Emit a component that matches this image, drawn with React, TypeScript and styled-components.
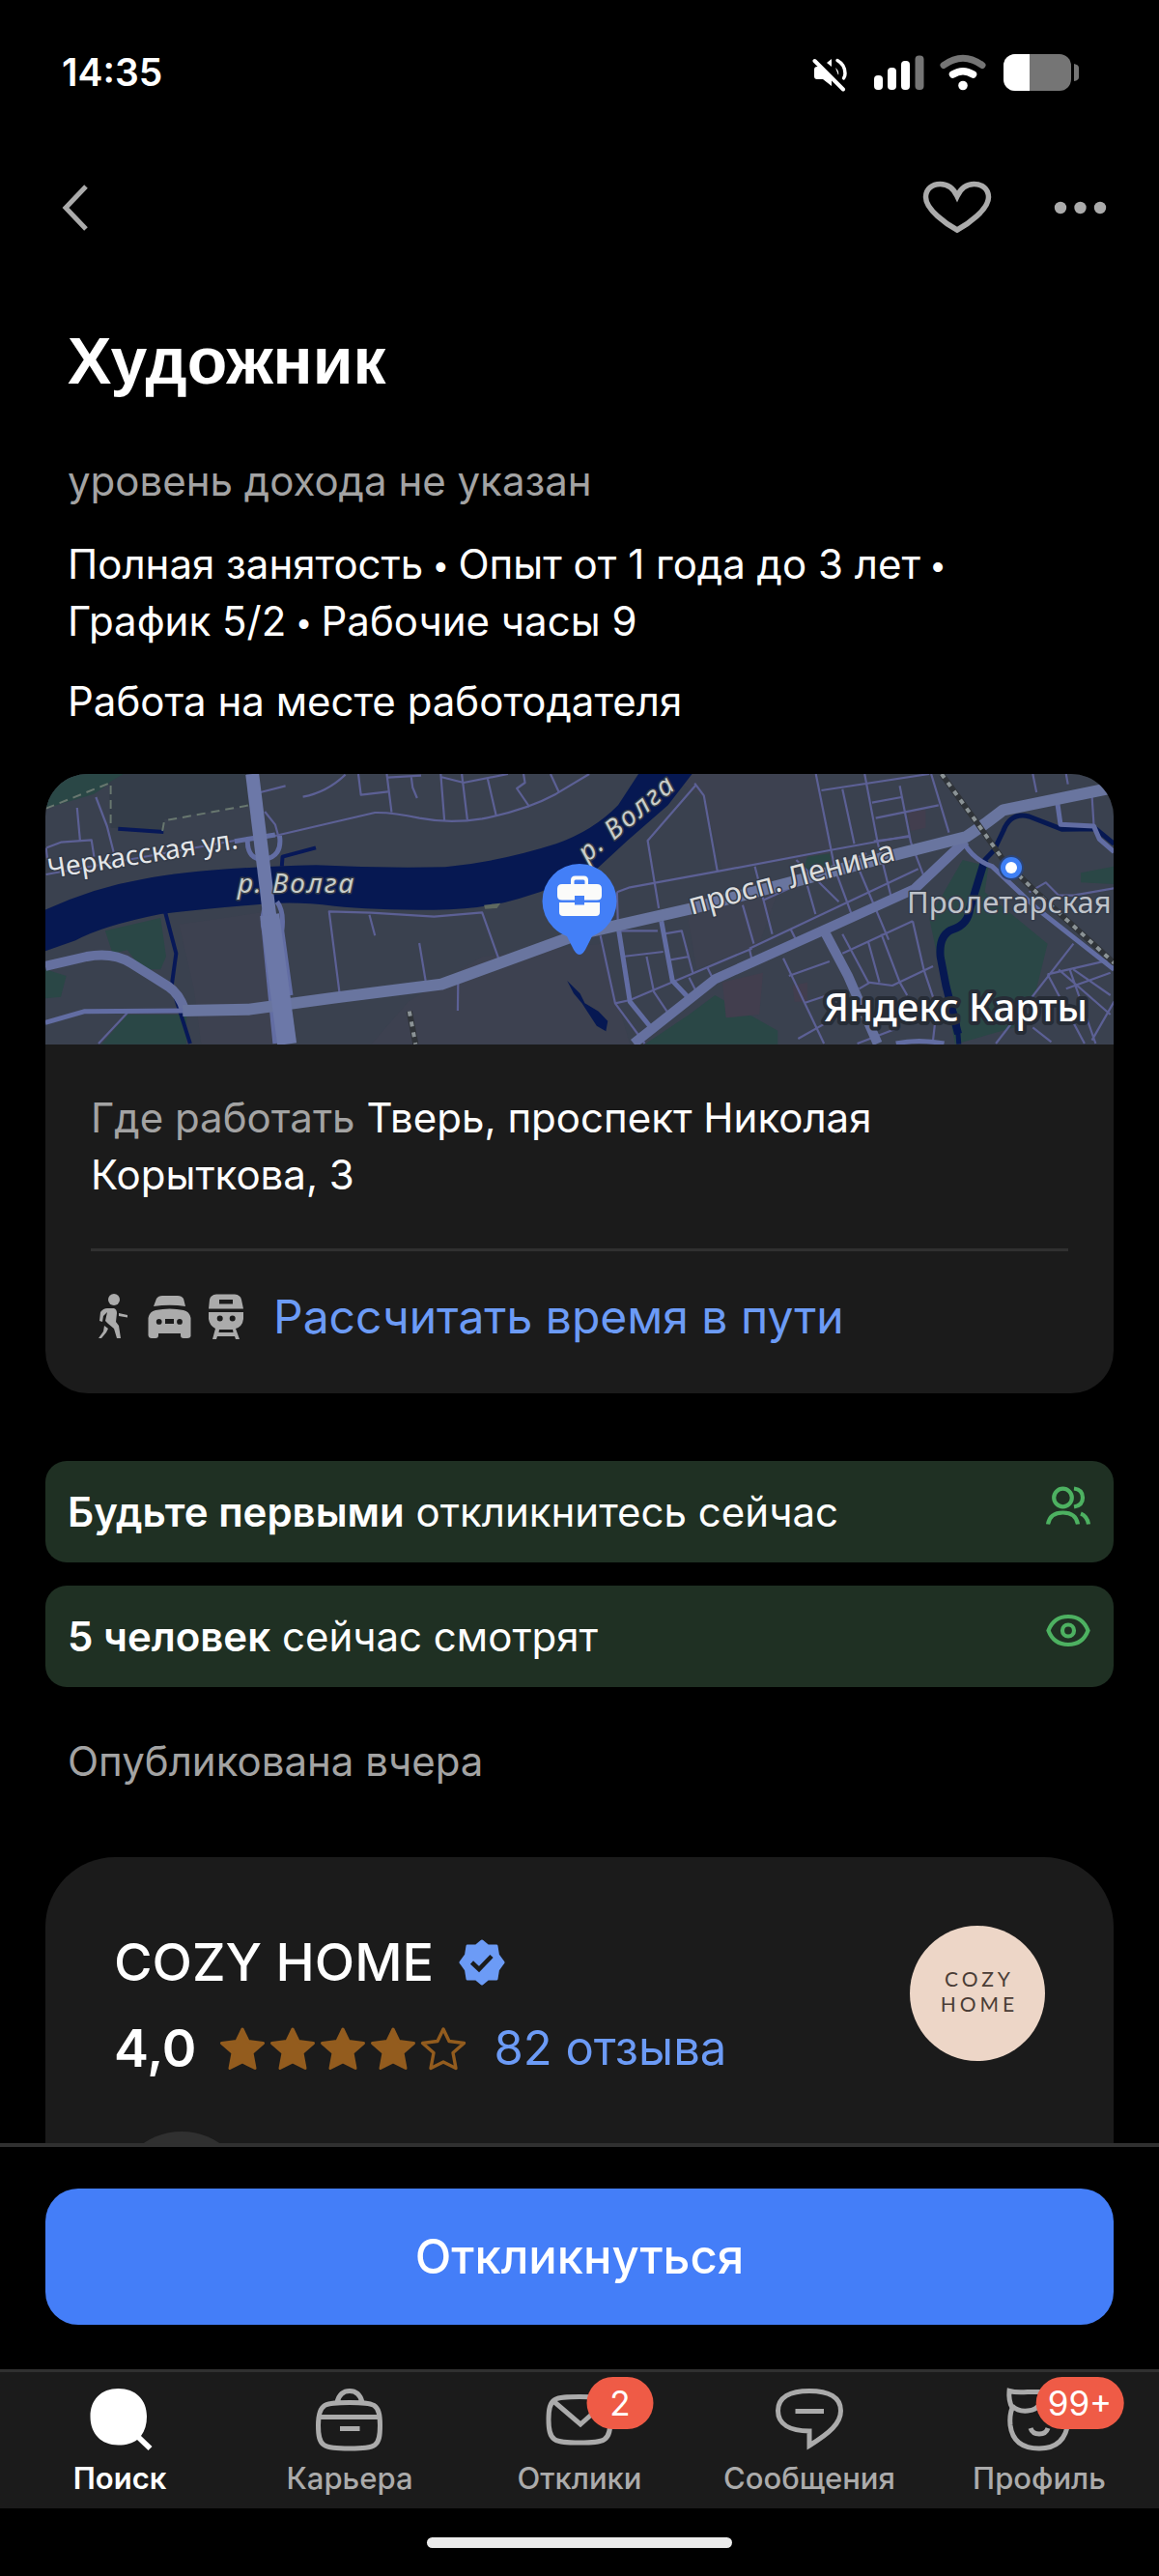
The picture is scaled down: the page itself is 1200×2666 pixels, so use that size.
import React from "react";
import styled, { createGlobalStyle } from "styled-components";

const color = {
  bg: "#000000",
  card: "#1b1b1b",
  line: "#303030",
  text: "#ffffff",
  muted: "#a3a3a3",
  icon: "#ababab",
  link: "#6c9bf6",
  accent: "#447ef8",
  notice: "#1f3023",
  green: "#4db161",
  star: "#935c1e",
  badge: "#ef5b46",
};

const GlobalStyle = createGlobalStyle`
  *, *::before, *::after { box-sizing: border-box; }
  body { margin: 0; background: ${color.bg}; color: ${color.text}; font-family: Inter, "Noto Sans", sans-serif; }
  h1, h2, p { margin: 0; }
  button { font: inherit; color: inherit; background: none; border: 0; padding: 0; cursor: pointer; }
  a { text-decoration: none; }
  svg { display: block; flex: none; }
`;

const Screen = styled.div`
  display: flex;
  flex-direction: column;
  height: 100vh;
  background: ${color.bg};
`;

const StatusBar = styled.div`
  display: flex;
  align-items: center;
  justify-content: space-between;
  height: 150px;
  padding: 0 83px 0 64px;
  flex: none;
`;

const Clock = styled.time`
  font-size: 39px;
  line-height: 48px;
  font-weight: 600;
`;

const StatusIcons = styled.div`
  display: flex;
  align-items: center;
`;

const NavBar = styled.header`
  display: flex;
  align-items: center;
  justify-content: space-between;
  height: 130px;
  padding: 0 54px 0 60px;
  flex: none;
`;

const NavActions = styled.div`
  display: flex;
  align-items: center;
  gap: 62px;
`;

const IconButton = styled.button`
  display: flex;
  align-items: center;
  justify-content: center;
  height: 72px;
`;

const Content = styled.main`
  flex: 1;
  min-height: 0;
  overflow-y: auto;
  scrollbar-width: none;
  padding: 53px 47px 0;
`;

const Title = styled.h1`
  padding: 0 23px;
  font-family: "Liberation Sans", Arial, sans-serif;
  font-size: 68px;
  line-height: 80px;
  font-weight: 700;
`;

const Text = styled.p<{ $muted?: boolean; $top?: number }>`
  padding: 0 23px;
  margin-top: ${(p) => p.$top ?? 0}px;
  font-size: 42px;
  line-height: 59px;
  color: ${(p) => (p.$muted ? color.muted : color.text)};
`;

const Dot = styled.span`
  font-family: "Liberation Sans", Arial, sans-serif;
  font-size: 36px;
  line-height: 36px;
`;

const PlaceCard = styled.section`
  margin-top: 46px;
  border-radius: 44px;
  overflow: hidden;
  background: ${color.card};
`;

const MapFrame = styled.div`
  height: 280px;

  svg {
    width: 100%;
    height: 100%;
  }
`;

const PlaceBody = styled.div`
  padding: 46px 47px 49px;
`;

const Address = styled.p`
  font-size: 42px;
  line-height: 59px;
`;

const Muted = styled.span`
  color: ${color.muted};
`;

const Divider = styled.hr`
  height: 3px;
  margin: 47px 0 38px;
  border: 0;
  background: ${color.line};
`;

const RouteLink = styled.a`
  display: flex;
  align-items: center;
  gap: 27px;
  color: ${color.link};
  font-size: 48px;
  line-height: 60px;
`;

const Notices = styled.div`
  display: flex;
  flex-direction: column;
  gap: 24px;
  margin-top: 70px;
`;

const Notice = styled.div`
  display: flex;
  justify-content: space-between;
  padding: 23px;
  border-radius: 22px;
  background: ${color.notice};
  font-size: 42px;
  line-height: 59px;

  b {
    font-weight: 600;
  }
`;

const CompanyCard = styled.section`
  display: flex;
  flex-direction: column;
  margin-top: 70px;
  padding: 71px 71px 0;
  border-radius: 72px 72px 0 0;
  background: ${color.card};
`;

const CompanyHead = styled.div`
  display: flex;
  justify-content: space-between;
`;

const CompanyInfo = styled.div`
  display: flex;
  flex-direction: column;
  gap: 23px;
  padding-top: 5px;
`;

const CompanyName = styled.h2`
  display: flex;
  align-items: center;
  gap: 26px;
  font-size: 54px;
  line-height: 66px;
  font-weight: 500;
`;

const Rating = styled.div`
  display: flex;
  align-items: center;
  gap: 24px;
  font-size: 54px;
  line-height: 66px;
  font-weight: 600;
`;

const Stars = styled.div`
  display: flex;
  gap: 4px;
`;

const Reviews = styled.a`
  color: ${color.link};
  font-size: 49px;
  font-weight: 400;
  padding-left: 4px;
`;

const CompanyLogo = styled.div`
  display: flex;
  flex-direction: column;
  align-items: center;
  justify-content: center;
  width: 140px;
  height: 140px;
  padding: 0 0 4px 4px;
  border-radius: 50%;
  background: #edd6c7;
  color: #4a3d36;
  font-family: Lato, sans-serif;
  font-size: 21px;
  line-height: 26px;
  letter-spacing: 4px;
`;

const ReviewerAvatar = styled.div`
  width: 140px;
  height: 140px;
  margin: 53px 0 71px;
  border-radius: 50%;
  background: ${color.line};
`;

const ApplyBar = styled.div`
  flex: none;
  padding: 43px 47px 46px;
  border-top: 4px solid ${color.line};
`;

const ApplyButton = styled.button`
  width: 100%;
  height: 141px;
  border-radius: 34px;
  background: ${color.accent};
  color: ${color.text};
  font-size: 49px;
  line-height: 60px;
  font-weight: 500;
`;

const TabBar = styled.nav`
  display: flex;
  flex: none;
  padding: 0 5px;
  border-top: 3px solid ${color.line};
  background: ${color.card};
`;

const Tab = styled.a<{ $active?: boolean }>`
  display: flex;
  flex: 1 1 0;
  flex-direction: column;
  align-items: center;
  gap: 5px;
  padding: 13px 0 11px;
  color: ${(p) => (p.$active ? color.text : color.icon)};
  font-size: 31px;
  line-height: 40px;
  font-weight: ${(p) => (p.$active ? 600 : 500)};
`;

const TabIcon = styled.span`
  position: relative;
  display: block;
  width: 72px;
  height: 72px;
`;

const Badge = styled.span`
  position: absolute;
  top: -8px;
  left: 78px;
  transform: translateX(-50%);
  min-width: 69px;
  height: 54px;
  padding: 0 12px;
  border-radius: 27px;
  background: ${color.badge};
  color: ${color.text};
  font-size: 35px;
  line-height: 54px;
  font-weight: 400;
  text-align: center;
`;

const HomeArea = styled.div`
  display: flex;
  flex: none;
  justify-content: center;
  padding: 30px 0 29px;
`;

const HomeIndicator = styled.div`
  width: 316px;
  height: 11px;
  border-radius: 6px;
  background: #ebebeb;
`;

/* ---------- Status and navigation icons ---------- */

function StatusGlyphs() {
  return (
    <svg width="276" height="44" viewBox="0 -3 276 44" fill="#fff" aria-hidden="true">
      {/* muted speaker */}
      <path d="M5 13H11L20 22V33L11 26H5Q2 26 2 23V16Q2 13 5 13Z" />
      <path d="M15 9L20 5V13Z M24 14Q28 17 27 22Z" />
      <path d="M26 6.500Q34 11 34 20Q34 23 32.500 25" fill="none" stroke="#fff" strokeWidth="3.500" strokeLinecap="round" />
      <path d="M4 4L34 34" stroke="#000" strokeWidth="7" />
      <path d="M2.500 7L32 36.500" stroke="#fff" strokeWidth="4" strokeLinecap="round" />
      {/* signal */}
      <rect x="64" y="22" width="9" height="15" rx="4" />
      <rect x="78" y="14" width="9" height="23" rx="4" />
      <rect x="92" y="7" width="9" height="30" rx="4" />
      <rect x="106.500" y="1.500" width="9" height="35.500" rx="4" fill="#757575" />
      {/* wifi */}
      <path d="M136 11.500Q156 -3 176 11.500" fill="none" stroke="#757575" strokeWidth="7" strokeLinecap="round" />
      <path d="M145.500 21Q156 14.500 166.500 21" fill="none" stroke="#fff" strokeWidth="7.500" strokeLinecap="round" />
      <circle cx="156" cy="32.500" r="4.800" />
      {/* battery */}
      <clipPath id="battery">
        <rect x="198" y="0" width="70" height="38" rx="12" />
      </clipPath>
      <g clipPath="url(#battery)">
        <rect x="198" width="70" height="38" fill="#757575" />
        <rect x="198" width="27" height="38" />
      </g>
      <path d="M271 10q5 1 5 4v10q0 3-5 4Z" fill="#757575" />
    </svg>
  );
}

const BackIcon = () => (
  <svg width="32" height="52" viewBox="0 0 32 52" fill="none" stroke={color.icon} strokeWidth="5" aria-hidden="true">
    <path d="M29 4L8 26l21 22" />
  </svg>
);

const HeartIcon = () => (
  <svg width="74" height="60" viewBox="0 0 74 60" fill="none" stroke={color.icon} strokeWidth="5.500" aria-hidden="true">
    <path d="M37 53C26 47 4.500 32 4.500 19C4.500 10.500 11 5.500 19.500 5.500C28 5.500 33.500 10.500 37 18C40.500 10.500 46 5.500 54.500 5.500C63 5.500 69.500 10.500 69.500 19C69.500 32 48 47 37 53Z" />
  </svg>
);

const MoreIcon = () => (
  <svg width="56" height="16" viewBox="0 0 56 16" fill={color.icon} aria-hidden="true">
    <circle cx="8" cy="8" r="6.200" />
    <circle cx="28.500" cy="8" r="6.200" />
    <circle cx="49" cy="8" r="6.200" />
  </svg>
);

/* ---------- Map ---------- */

type Pen = "minor" | "street" | "major" | "stream";

const pens: Record<Pen, { stroke: string; width: number }> = {
  minor: { stroke: "#5c6095", width: 2.2 },
  street: { stroke: "#626da3", width: 5 },
  major: { stroke: "#65709f", width: 10 },
  stream: { stroke: "#071858", width: 4 },
};

const roads: [Pen, string][] = [
  // west bank
  ["minor", "M104 138L112 238M22 262L60 245L143 238L150 290M20 262L24 300M155 105L185 195L205 285M20 345L530 240"],
  ["minor", "M600 90L668 70M612 150L640 190L652 240M640 225L910 153Q960 152 1030 170Q1110 188 1200 172Q1320 145 1400 95L1490 33"],
  ["minor", "M715 104Q780 90 830 35M865 33L872 98L945 88M942 33L955 152M945 44L1035 38M1008 40L1012 75L1024 108M1088 33L1098 178M1088 42L1150 60L1270 33M1145 33L1160 175M1215 48L1238 162M1312 33L1316 60L1294 78L1328 135M1385 33L1408 90"],
  ["street", "M530 242L640 222M565 240Q565 300 610 298Q660 290 652 225"],
  ["street", "M620 430Q600 470 610 520L640 870M645 430Q665 460 658 520L682 720"],
  ["minor", "M814 712L786 460L900 464L1070 476L1200 463L1244 604M895 470L910 535M1030 558L1047 675M1135 680L1134 768M162 870L240 775"],
  ["major", "M18 630L130 600Q200 585 250 620L350 692Q380 715 395 765"],
  ["street", "M18 805L125 770L400 768"],
  // centre
  ["minor", "M1780 65L1648 240L1678 450M1775 62L1800 100L1837 338M1565 400L1600 385L1840 335L2140 270L2355 225M1565 400L1568 520"],
  ["minor", "M2103 33L2155 330L2200 470M2118 84L2410 33M2175 80L2207 250M2235 33L2270 245L2310 430M2330 70L2360 245L2395 350M2255 122L2335 105M2265 170L2435 130M2415 33L2463 215M2260 242L2355 228"],
  ["minor", "M1938 320L1985 530M1905 440L1935 560M1960 425L2240 280M2080 380L2102 468M2220 330L2300 548M2050 300L2165 430M1923 575L2380 328M1923 575L1930 610M2035 515L2050 550"],
  ["minor", "M1520 535L1560 745L1640 870M1565 520L1675 520M1580 600L1690 585M1645 600L1665 710L1700 770M1690 530L1740 520L1770 650M1710 610L1760 600M1560 745L1600 735L1930 575M1760 665L1780 710M1810 635L1825 670"],
  ["street", "M1570 520L1600 740L1660 825M1685 490L1715 675L1760 730"],
  ["minor", "M2015 605L2125 870M2030 660L2140 615M2070 745L2135 720M2175 530L2245 680L2310 690L2420 630M2175 590L2365 490M2245 555L2275 680M2280 530L2330 680L2350 720M2365 490L2395 640L2430 760L2420 860M2055 855L2140 800M2215 870L2330 820M2220 700L2250 680"],
  ["street", "M2320 870Q2380 855 2450 870"],
  // east side
  ["minor", "M2590 870L2800 560M2730 655L2830 870M2760 640L2900 780M2800 640L2900 720M2730 655L2900 610M2780 700L2900 650M2680 400L2725 370L2760 410L2800 410L2910 388M2690 820L2740 865M2850 860L2910 740M2790 640L2860 870M2690 33L2700 90M2780 33L2785 65M2850 100L2855 190"],
  ["street", "M2755 110L2765 190L2855 195L2870 235L2910 275M2505 250Q2530 300 2580 320L2700 450L2910 640"],
  // trunk roads
  ["major", "M2508 240L2370 390L2120 520L1830 670L1610 870M2130 530L2190 660L2270 870"],
];

const streams: string[] = [
  "M215 203L338 213M658 320L660 290L750 262M342 460L372 590L360 690L410 870",
];

const MapLabel = styled.text<{ $size: number; $tone: string }>`
  font-family: "Noto Sans", "Open Sans", sans-serif;
  font-size: ${(p) => p.$size}px;
  fill: ${(p) => p.$tone};
  stroke: #343b49;
  stroke-width: 3px;
  stroke-linejoin: round;
  paint-order: stroke;
`;

const WaterLabel = styled(MapLabel)`
  font-style: italic;
  letter-spacing: 2px;
`;

const BrandLabel = styled(MapLabel)`
  font-weight: 500;
  stroke: #262c36;
  stroke-width: 8px;
`;

function CityMap() {
  return (
    <svg viewBox="0 0 1106 280" preserveAspectRatio="xMidYMid slice" role="img" aria-label="Карта">
      <rect width="1106" height="280" fill="#3a414f" />
      <g transform="translate(-7 -11) scale(.38265 .33333)">
        <g fill="#3d4150">
          <path d="M380 500L620 460L660 872H440L420 700Z" />
          <path d="M1700 33H2100L2150 280L1850 330L1800 110Z" />
          <path d="M1200 600L1520 560L1600 872H900L1000 740Z" />
          <path d="M1750 430L2000 400L1950 560L1780 640Z" />
        </g>
        <g fill="#2a4746">
          <path d="M18 33H230L150 95L18 140Z" />
          <path d="M180 520L330 480L345 600L330 640L280 640L240 580L200 590Z" />
          <path d="M240 780H400L400 872H170Z" />
          <path d="M18 640L75 660L60 725L18 730Z" />
          <path d="M1760 780L1830 720L2000 830V872H1640Z" />
          <path d="M2450 400L2500 300L2570 320L2560 400L2730 560L2700 700L2640 820L2480 872L2450 700L2410 480Z" />
          <path d="M2820 340L2910 320V375L2820 370Z" />
          <path d="M2080 290L2140 280L2150 350L2070 330Z" />
        </g>
        <path d="M190 60L230 33H570L575 130L340 175V210L195 200Z" fill="#343d49" />
        <g fill="#423e4e">
          <path d="M1850 680L1960 650L1950 780L1860 790Z" />
          <path d="M2350 150L2400 145V200L2360 210Z" />
          <path d="M2040 690L2080 680V740H2045Z" />
        </g>
        <path
          d="M18 455Q150 385 280 360Q430 325 750 316Q920 326 1100 322Q1250 305 1400 250Q1500 210 1568 130L1623 33H1768L1703 130L1593 240L1513 325Q1420 380 1300 420Q1200 455 1070 455Q900 455 800 443Q700 428 620 436Q460 450 330 468Q170 505 100 550L18 583Z"
          fill="#061852"
        />
        <path d="M1205 440L1250 434L1240 450L1208 452Z" fill="#5f6960" />
        <path d="M1430 675L1465 715L1478 745L1515 770L1540 800L1535 832L1510 815L1490 780L1470 745L1448 715Z" fill="#061852" />
        <g fill="none" strokeLinejoin="round">
          {streams.map((d) => (
            <path key={d} d={d} stroke={pens.stream.stroke} strokeWidth={pens.stream.width} vectorEffect="non-scaling-stroke" />
          ))}
          <path
            d="M2490 872L2485 800L2455 690L2440 600Q2435 530 2475 515Q2515 500 2520 450L2560 300L2585 270L2610 210Q2630 150 2680 165L2770 205L2860 203L2910 250"
            stroke="#061852"
            strokeWidth="5"
            vectorEffect="non-scaling-stroke"
          />
          <path
            d="M2488 840L2455 690L2440 600Q2435 530 2475 515Q2515 500 2520 450L2560 300"
            stroke="#061852"
            strokeWidth="8"
            vectorEffect="non-scaling-stroke"
          />
          <path d="M20 140L195 60V200M335 210L340 178L570 130" stroke="#68776f" strokeWidth="2" strokeDasharray="9 6" vectorEffect="non-scaling-stroke" />
          {roads.map(([pen, d]) => (
            <path key={d} d={d} stroke={pens[pen].stroke} strokeWidth={pens[pen].width} vectorEffect="non-scaling-stroke" />
          ))}
          <path
            d="M390 768L570 764L800 728L1090 686L1463 530L1770 450L2330 280L2510 228Q2560 190 2610 145L2910 75"
            stroke="#69759f"
            strokeWidth="12"
            vectorEffect="non-scaling-stroke"
          />
          <path d="M578 33L628 500" stroke="#6c78a8" strokeWidth="14" vectorEffect="non-scaling-stroke" />
          <path d="M625 470L672 872" stroke="#6c78a8" strokeWidth="20" vectorEffect="non-scaling-stroke" />
          <path d="M2443 33L2530 170L2610 300L2690 390L2910 620M1003 770L1020 872" stroke="#2f3338" strokeWidth="6" vectorEffect="non-scaling-stroke" />
          <path d="M2443 33L2530 170L2610 300L2690 390L2910 620M1003 770L1020 872" stroke="#8b9396" strokeWidth="4" strokeDasharray="5 6" vectorEffect="non-scaling-stroke" />
        </g>
      </g>

      <MapLabel $size={28} $tone="#e4e6e8" transform="translate(4 108) rotate(-9)">Черкасская ул.</MapLabel>
      <WaterLabel $size={28} $tone="#c9cdc9" transform="translate(199 123)">р. Волга</WaterLabel>
      <WaterLabel $size={28} $tone="#c9cdc9" transform="translate(561 92) rotate(-40)">р. Волга</WaterLabel>
      <MapLabel $size={31} $tone="#dcdddd" transform="translate(669 146) rotate(-15)">просп. Ленина</MapLabel>
      <MapLabel $size={31} $tone="#bfc3ca" x="892" y="144">Пролетарская</MapLabel>

      <circle cx="1000" cy="97" r="13" fill="#2c4476" />
      <circle cx="1000" cy="97" r="11" fill="#3f80f5" />
      <circle cx="1000" cy="97" r="6" fill="#fff" />

      <path d="M553 187Q549 187 545 178L540 168Q532 165 526 159A38.500 38.500 0 1 1 580 159Q574 165 566 168L561 178Q557 187 553 187Z" fill="#437ff7" />
      <g fill="#fbfbf9">
        <path d="M544 116V110Q544 105.500 548.500 105.500H557.500Q562 105.500 562 110V116H558.500V111Q558.500 109.500 557 109.500H549Q547.500 109.500 547.500 111V116Z" />
        <path d="M535 114H571Q576 114 576 119V126Q576 130.500 571 130.500H558V126H548V130.500H535Q530 130.500 530 126V119Q530 114 535 114Z" />
        <path d="M532 133H548V135.500H558V133H574V143Q574 147 570 147H536Q532 147 532 143Z" />
      </g>

      <BrandLabel $size={40} $tone="#ffffff" x="806" y="256">Яндекс Карты</BrandLabel>
    </svg>
  );
}

/* ---------- Content icons ---------- */

const TransportIcons = () => (
  <svg width="162" height="52" viewBox="1 0 162 52" fill={color.icon} aria-hidden="true">
    {/* pedestrian */}
    <circle cx="25" cy="8" r="6" />
    <path d="M18 17H25Q28 18 28 22L27 31L30 35L32 48H28L25 38L19 33L16 30L18 21L14 25L13 31L10 30L11 21Q14 17 18 17ZM30 22L39 24V26.500L30 25ZM15 35L19 38L17 42L12 48H9L14 41Z" />
    {/* car */}
    <path d="M66 15L69 7Q71 4 75 4H91Q95 4 97 7L99 15Q83 12.500 66 15Z" />
    <path
      fillRule="evenodd"
      d="M68 19Q83 16 97 19Q103 20 104.500 27V46Q104 48 101 48H97Q94 48 94 45V43H71V45Q71 48 68 48H64Q61 48 60.500 45V27Q62 20 68 19ZM71.700 28A2.900 2.900 0 1 0 71.700 33.800A2.900 2.900 0 1 0 71.700 28ZM93 28A2.900 2.900 0 1 0 93 33.800A2.900 2.900 0 1 0 93 28ZM78 28V33H87V28Z"
    />
    {/* train */}
    <path fillRule="evenodd" d="M123 17.500L124 8Q125 3 131 2.500H150Q156 3 157 8L159 17.500ZM134 8V12.500H148V8Z" />
    <path
      fillRule="evenodd"
      d="M123 21H159V28Q158 36 151 38L155 49H151L150 46H132L131 49H127L130 38Q124 35 123 28ZM134.700 24.500A3 3 0 1 0 134.700 30.500A3 3 0 1 0 134.700 24.500ZM147.700 24.500A3 3 0 1 0 147.700 30.500A3 3 0 1 0 147.700 24.500ZM134 39L133.500 42H148.500L148 39Z"
    />
  </svg>
);

const PeopleIcon = () => (
  <svg width="48" height="48" viewBox="0 0 48 48" fill="none" stroke={color.green} strokeWidth="4.200" aria-hidden="true">
    <circle cx="18.500" cy="15" r="9.300" />
    <path d="M30 5.500Q39 6.500 39 15Q39 23 30 24.500M3 42.500Q5 30.500 18.500 30.500Q32 30.500 34 42.500M37 31.500Q43.500 34 45 42.500" />
  </svg>
);

const EyeIcon = () => (
  <svg width="48" height="48" viewBox="0 0 48 48" fill="none" stroke={color.green} strokeWidth="4.200" aria-hidden="true">
    <path d="M3.500 23.500Q9 9 24 9Q39 9 44.500 23.500Q39 38 24 38Q9 38 3.500 23.500Z" />
    <circle cx="24" cy="23.500" r="6" />
  </svg>
);

const VerifiedIcon = () => (
  <svg width="48" height="48" viewBox="0 0 48 48" aria-label="Проверенная компания">
    <path
      fill={color.link}
      stroke={color.link}
      strokeWidth="3"
      strokeLinejoin="round"
      d="M24 2L30 7H39L40.500 16.500L46 24L40.500 31.500L39 41H30L24 46L18 41H9L7.500 31.500L2 24L7.500 16.500L9 7H18Z"
    />
    <path d="M13.500 24L21 31L34 17.500" fill="none" stroke={color.card} strokeWidth="4.500" />
  </svg>
);

const StarIcon = ({ filled }: { filled: boolean }) => (
  <svg width="48" height="48" viewBox="0 0 48 48" aria-hidden="true">
    <path
      d="M24 4L30 16.500L45.500 18.500L34 28.500L37 44.500L24 38L11 44.500L14 28.500L2.500 18.500L18 16.500Z"
      fill={filled ? color.star : "none"}
      stroke={color.star}
      strokeWidth={filled ? 3 : 3.4}
      strokeLinejoin="round"
    />
  </svg>
);

/* ---------- Tab icons ---------- */

const tabSvg = { width: 72, height: 72, viewBox: "0 0 72 72", fill: "none", stroke: "currentColor", strokeWidth: 5, "aria-hidden": true } as const;

const SearchIcon = () => (
  <svg {...tabSvg}>
    <path d="M34.500 4C52.500 4 64 15.500 64 33C64 41 62 47.500 58 53L69.500 64L65.500 68L54 57C49.500 60.500 43 62.500 34.500 62.500C16.500 62.500 5.500 50.500 5.500 33C5.500 15.500 16.500 4 34.500 4Z" fill="currentColor" stroke="none" />
  </svg>
);

const CareerIcon = () => (
  <svg {...tabSvg}>
    <path d="M36 18.500C61 18.500 67.500 18.500 67.500 42C67.500 64 64 66 36 66C8 66 3.500 64 3.500 42C3.500 18.500 11 18.500 36 18.500ZM4 33.500H68M26 45.500H46.500M23 18Q26 6.500 36 6.500Q46 6.500 49 18" />
  </svg>
);

const MailIcon = () => (
  <svg {...tabSvg}>
    <path d="M36 12.500C62 12.500 68 13 68 36C68 59 62 60 36 60C10 60 4 59 4 36C4 13 10 12.500 36 12.500ZM9 17L37 41L64 17" />
  </svg>
);

const ChatIcon = () => (
  <svg {...tabSvg}>
    <path d="M36 6.500C56 6.500 68.500 13 68.500 27C68.500 40 57 50 36 63V48C16 48 3.500 41 3.500 27C3.500 13 16 6.500 36 6.500ZM21.500 27.500H51" />
  </svg>
);

const ProfileIcon = () => (
  <svg {...tabSvg}>
    <path d="M8 24Q4 16 5 6.500Q12 8.500 24 7.500H48Q60 8.500 67 6.500Q68 16 64 24Q66 32 66 38Q63 66 36 66Q9 66 6 42Q5 32 8 24ZM8 22Q14 28 24 27Q34 26 36 20M27 45Q29 51 36 51Q43 51 45 45" />
  </svg>
);

const tabs = [
  { label: "Поиск", Icon: SearchIcon, active: true },
  { label: "Карьера", Icon: CareerIcon },
  { label: "Отклики", Icon: MailIcon, badge: "2" },
  { label: "Сообщения", Icon: ChatIcon },
  { label: "Профиль", Icon: ProfileIcon, badge: "99+" },
];

export default function App() {
  return (
    <Screen>
      <GlobalStyle />
      <StatusBar>
        <Clock>14:35</Clock>
        <StatusIcons>
          <StatusGlyphs />
        </StatusIcons>
      </StatusBar>
      <NavBar>
        <IconButton aria-label="Назад">
          <BackIcon />
        </IconButton>
        <NavActions>
          <IconButton aria-label="В избранное">
            <HeartIcon />
          </IconButton>
          <IconButton aria-label="Ещё">
            <MoreIcon />
          </IconButton>
        </NavActions>
      </NavBar>

      <Content>
        <Title>Художник</Title>
        <Text $muted $top={55}>уровень дохода не указан</Text>
        <Text $top={27}>
          Полная занятость <Dot>•</Dot> Опыт от 1 года до 3 лет <Dot>•</Dot> График 5/2 <Dot>•</Dot> Рабочие часы 9
        </Text>
        <Text $top={24}>Работа на месте работодателя</Text>

        <PlaceCard>
          <MapFrame>
            <CityMap />
          </MapFrame>
          <PlaceBody>
            <Address>
              <Muted>Где работать</Muted> Тверь, проспект Николая Корыткова, 3
            </Address>
            <Divider />
            <RouteLink href="#route">
              <TransportIcons />
              Рассчитать время в пути
            </RouteLink>
          </PlaceBody>
        </PlaceCard>

        <Notices>
          <Notice>
            <span>
              <b>Будьте первыми</b> откликнитесь сейчас
            </span>
            <PeopleIcon />
          </Notice>
          <Notice>
            <span>
              <b>5 человек</b> сейчас смотрят
            </span>
            <EyeIcon />
          </Notice>
        </Notices>
        <Text $muted $top={47}>Опубликована вчера</Text>

        <CompanyCard>
          <CompanyHead>
            <CompanyInfo>
              <CompanyName>
                COZY HOME
                <VerifiedIcon />
              </CompanyName>
              <Rating>
                4,0
                <Stars>
                  {[1, 2, 3, 4, 5].map((n) => (
                    <StarIcon key={n} filled={n <= 4} />
                  ))}
                </Stars>
                <Reviews href="#reviews">82 отзыва</Reviews>
              </Rating>
            </CompanyInfo>
            <CompanyLogo>
              <span>COZY</span>
              <span>HOME</span>
            </CompanyLogo>
          </CompanyHead>
          <ReviewerAvatar />
        </CompanyCard>
      </Content>

      <ApplyBar>
        <ApplyButton>Откликнуться</ApplyButton>
      </ApplyBar>
      <TabBar>
        {tabs.map(({ label, Icon, badge, active }) => (
          <Tab key={label} href="#" $active={active} aria-current={active ? "page" : undefined}>
            <TabIcon>
              <Icon />
              {badge && <Badge>{badge}</Badge>}
            </TabIcon>
            {label}
          </Tab>
        ))}
      </TabBar>
      <HomeArea>
        <HomeIndicator />
      </HomeArea>
    </Screen>
  );
}
